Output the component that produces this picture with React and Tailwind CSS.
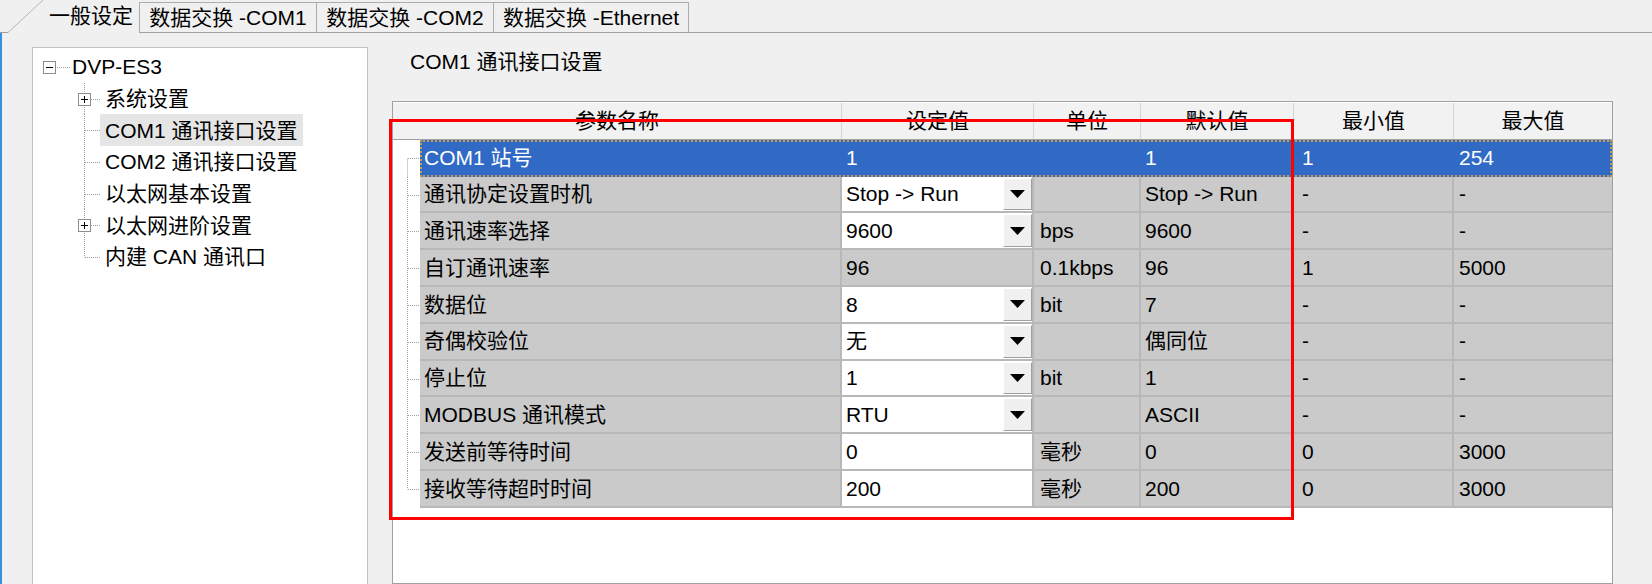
import React from "react";

const FONT = "font-['Liberation_Sans','Noto_Sans_CJK_SC',sans-serif]";

// 参数表数据
const rows = [
  { name: "COM1 站号", value: "1", kind: "text", unit: "", def: "1", min: "1", max: "254", selected: true },
  { name: "通讯协定设置时机", value: "Stop -> Run", kind: "select", unit: "", def: "Stop -> Run", min: "-", max: "-" },
  { name: "通讯速率选择", value: "9600", kind: "select", unit: "bps", def: "9600", min: "-", max: "-" },
  { name: "自订通讯速率", value: "96", kind: "text", unit: "0.1kbps", def: "96", min: "1", max: "5000" },
  { name: "数据位", value: "8", kind: "select", unit: "bit", def: "7", min: "-", max: "-" },
  { name: "奇偶校验位", value: "无", kind: "select", unit: "", def: "偶同位", min: "-", max: "-" },
  { name: "停止位", value: "1", kind: "select", unit: "bit", def: "1", min: "-", max: "-" },
  { name: "MODBUS 通讯模式", value: "RTU", kind: "select", unit: "", def: "ASCII", min: "-", max: "-" },
  { name: "发送前等待时间", value: "0", kind: "input", unit: "毫秒", def: "0", min: "0", max: "3000" },
  { name: "接收等待超时时间", value: "200", kind: "input", unit: "毫秒", def: "200", min: "0", max: "3000" },
];

const tree = [
  { label: "系统设置", expand: true },
  { label: "COM1 通讯接口设置", active: true },
  { label: "COM2 通讯接口设置" },
  { label: "以太网基本设置" },
  { label: "以太网进阶设置", expand: true },
  { label: "内建 CAN 通讯口" },
];

function Box({ x, y, minus }) {
  return (
    <g>
      <rect x={x + 0.5} y={y + 0.5} width="12" height="12" fill="#fff" stroke="#8c8c8c" />
      <line x1={x + 3} y1={y + 6.5} x2={x + 10} y2={y + 6.5} stroke="#000" />
      {!minus && <line x1={x + 6.5} y1={y + 3} x2={x + 6.5} y2={y + 10} stroke="#000" />}
    </g>
  );
}

function TreeLine({ last, expand }) {
  return (
    <svg width="67" height="32" className="shrink-0">
      <line x1="51.5" y1="0" x2="51.5" y2={last ? 16.5 : 32} stroke="#a0a0a0" strokeDasharray="1 1" />
      <line x1={expand ? 58 : 52} y1="16.5" x2="67" y2="16.5" stroke="#a0a0a0" strokeDasharray="1 1" />
      {expand && <Box x={45} y={10} />}
    </svg>
  );
}

function GutterLine({ first, last }) {
  return (
    <svg width="27" height="37" className="shrink-0 bg-white">
      <line x1="14.5" y1={first ? 18.5 : 0} x2="14.5" y2={last ? 18.5 : 37} stroke="#a0a0a0" strokeDasharray="1 1" />
      <line x1="15" y1="18.5" x2="27" y2="18.5" stroke="#a0a0a0" strokeDasharray="1 1" />
    </svg>
  );
}

function DropButton() {
  return (
    <div className="w-[29px] my-[1px] shrink-0 flex items-center justify-center bg-[#f0f0f0] border border-t-white border-l-white border-r-[#a0a0a0] border-b-[#a0a0a0]">
      <svg width="15" height="8">
        <polygon points="0,0 15,0 7.5,8" fill="#000" />
      </svg>
    </div>
  );
}

function Row({ r, i }) {
  const sel = r.selected;
  const cell = sel
    ? "border-r-2 border-b-2 border-transparent text-white"
    : "border-r-2 border-b-2 border-[#b8b8b8] bg-[#cacaca]";
  const valueBg = !sel && (r.kind === "select" || r.kind === "input") ? "bg-white" : "";
  return (
    <div className="flex h-[36.8px]">
      <GutterLine first={i === 0} last={i === rows.length - 1} />
      <div
        className={`flex flex-1 ${sel ? "bg-[#316ac5] outline-2 outline-dotted outline-[#c49a54] -outline-offset-2" : ""}`}
      >
        <div className={`${cell} w-[422px] pl-[4px] flex items-center`}>{r.name}</div>
        <div className={`${cell} ${valueBg} w-[192px] flex items-stretch`}>
          <span className="flex-1 pl-[4px] flex items-center">{r.value}</span>
          {r.kind === "select" && <DropButton />}
        </div>
        <div className={`${cell} w-[107px] pl-[6px] flex items-center`}>{r.unit}</div>
        <div className={`${cell} w-[153px] pl-[4px] flex items-center`}>{r.def}</div>
        <div className={`${cell} w-[160px] pl-[8px] flex items-center`}>{r.min}</div>
        <div className={`${sel ? "border-b-2 border-transparent" : "border-b-2 border-[#b8b8b8] bg-[#cacaca]"} flex-1 pl-[5px] flex items-center ${sel ? "text-white" : ""}`}>
          {r.max}
        </div>
      </div>
    </div>
  );
}

export default function App() {
  return (
    <div className={`${FONT} relative w-[1652px] h-[584px] overflow-hidden bg-[#f0f0f0] text-[21px] text-black flex flex-col`}>
      {/* 标签页 */}
      <div className="flex items-end h-[33px] shrink-0">
        <svg width="45" height="33" className="shrink-0">
          <line x1="0" y1="32.5" x2="8" y2="32.5" stroke="#a0a0a0" />
          <line x1="8" y1="32.5" x2="43" y2="0" stroke="#b4b4b4" />
        </svg>
        <div className="w-[94px] h-[33px] pl-[4px] flex items-center leading-none pb-[2px]">一般设定</div>
        <div className="w-[178px] h-[31px] border border-[#adadad] border-b-[#a0a0a0] flex items-center justify-center leading-none">
          数据交换 -COM1
        </div>
        <div className="w-[177px] h-[31px] border border-l-0 border-[#adadad] border-b-[#a0a0a0] flex items-center justify-center leading-none">
          数据交换 -COM2
        </div>
        <div className="w-[195px] h-[31px] border border-l-0 border-[#adadad] border-b-[#a0a0a0] flex items-center justify-center leading-none">
          数据交换 -Ethernet
        </div>
        <div className="flex-1 h-[1px] bg-[#a0a0a0]" />
      </div>

      {/* 内容区 */}
      <div className="flex flex-1 min-h-0 border-l-2 border-[#3a8ee0]">
        {/* 左侧树 */}
        <div className="ml-[30px] mt-[14px] w-[336px] h-[560px] shrink-0 bg-white border border-[#c2c2c2] pt-[3px]">
          <div className="flex items-center h-[31.67px]">
            <svg width="39" height="32" className="shrink-0">
              <Box x={10} y={10} minus />
              <line x1="24" y1="16.5" x2="38" y2="16.5" stroke="#a0a0a0" strokeDasharray="1 1" />
            </svg>
            <span className="leading-none">DVP-ES3</span>
          </div>
          {tree.map((t, i) => (
            <div key={t.label} className="flex items-stretch h-[31.67px]">
              <TreeLine last={i === tree.length - 1} expand={t.expand} />
              <span className={`px-[5px] flex items-center leading-none whitespace-nowrap ${t.active ? "bg-[#e5e5e5]" : ""}`}>
                {t.label}
              </span>
            </div>
          ))}
        </div>

        {/* 右侧设置 */}
        <div className="ml-[24px] pt-[15px] flex flex-col">
          <div className="h-[30px] pl-[18px] flex items-center leading-none">COM1 通讯接口设置</div>
          <div className="mt-[25px] w-[1221px] h-[520px] bg-white border border-[#a0a0a0]">
            {/* 表头 */}
            <div className="flex h-[38px] bg-[#f2f2f2] border-b border-[#a0a0a0] border-t border-t-white">
              {[
                ["参数名称", "w-[449px]"],
                ["设定值", "w-[192px]"],
                ["单位", "w-[107px]"],
                ["默认值", "w-[153px]"],
                ["最小值", "w-[160px]"],
                ["最大值", "flex-1"],
              ].map(([h, w], i) => (
                <div
                  key={h}
                  className={`${w} flex items-center justify-center leading-none ${i < 5 ? "border-r border-[#d5d5d5]" : ""}`}
                >
                  {h}
                </div>
              ))}
            </div>
            {rows.map((r, i) => (
              <Row key={r.name} r={r} i={i} />
            ))}
          </div>
        </div>
      </div>

      {/* 红色标注框 */}
      <div className="absolute left-[389px] top-[119px] w-[905px] h-[401px] border-[3px] border-[#ff0000] pointer-events-none" />
    </div>
  );
}
